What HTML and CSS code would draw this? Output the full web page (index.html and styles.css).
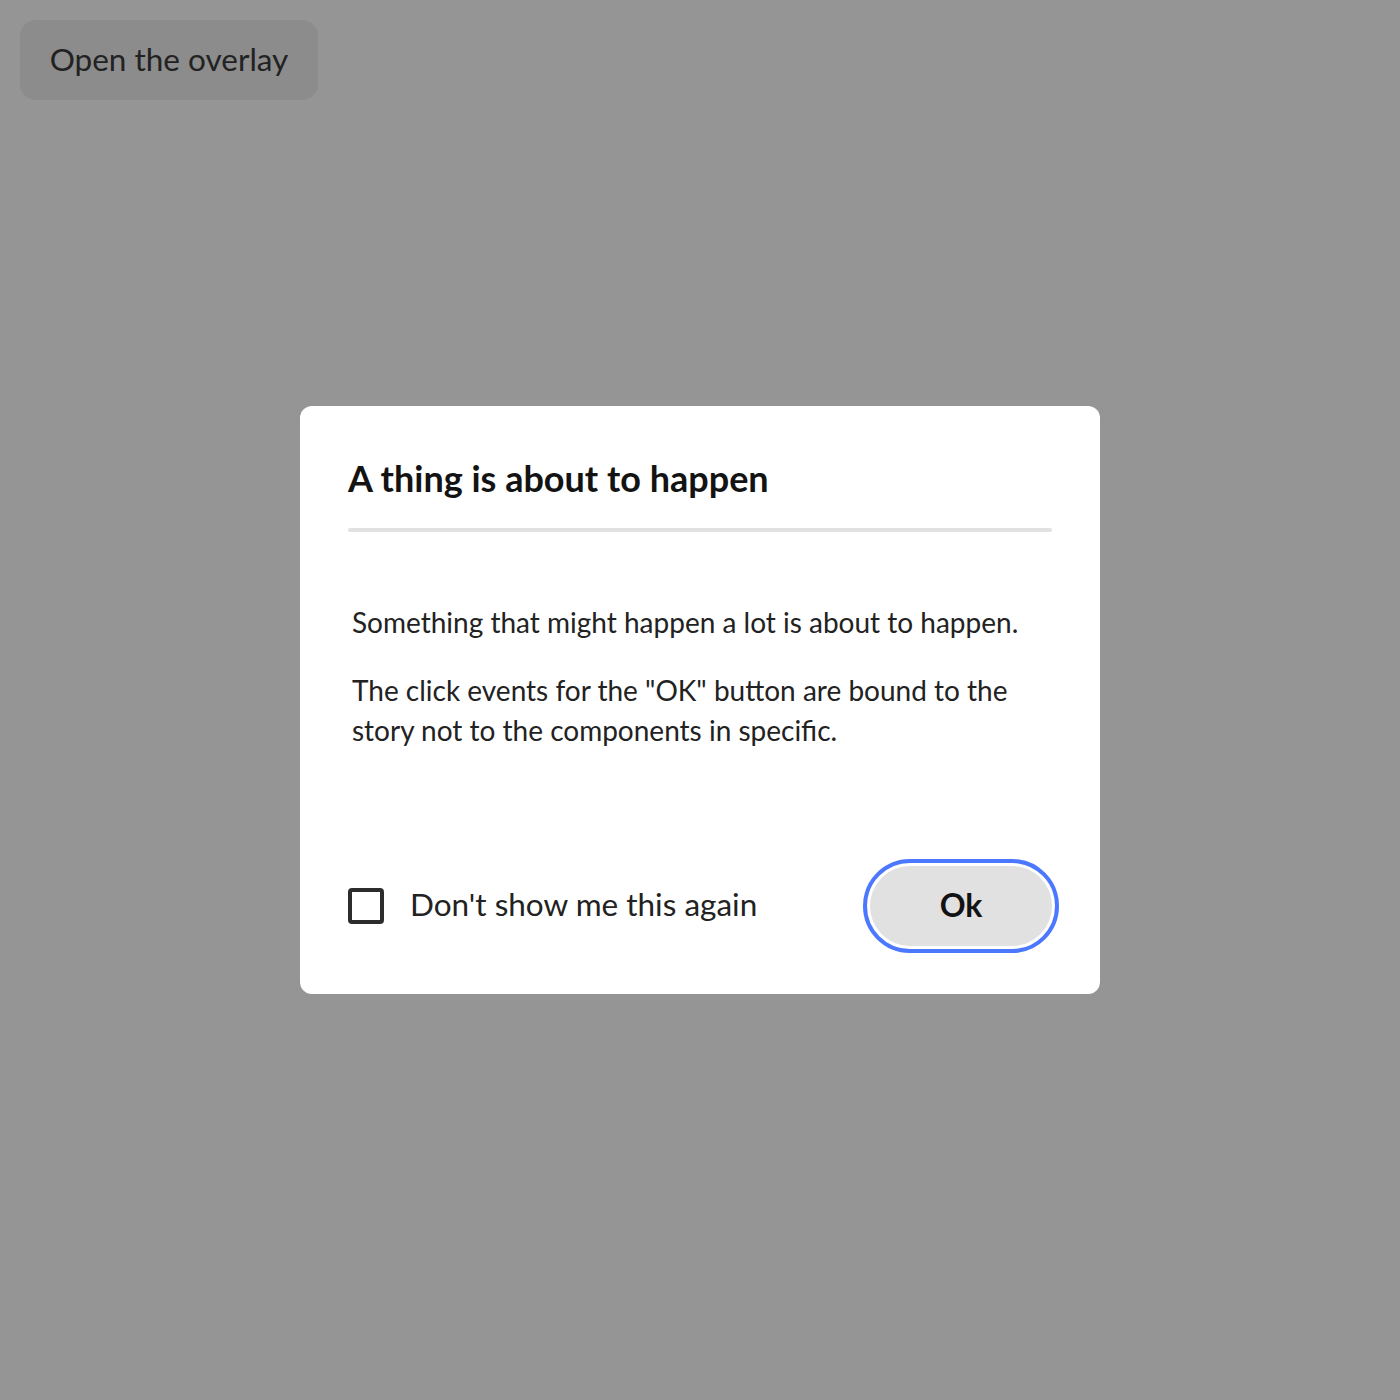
FILE: index.html
```html
<!DOCTYPE html>
<html lang="en">
<head>
<meta charset="utf-8">
<title>Dialog</title>
<link rel="stylesheet" href="styles.css">
</head>
<body>
<button class="trigger" type="button">Open the overlay</button>
<div class="overlay">
  <section class="dialog" role="dialog" aria-labelledby="dlg-title">
    <h2 class="dialog-title" id="dlg-title">A thing is about to happen</h2>
    <hr class="dialog-divider">
    <div class="dialog-body">
      <p>Something that might happen a lot is about to happen.</p>
      <p>The click events for the "OK" button are bound to the story not to the components in specific.</p>
    </div>
    <div class="dialog-footer">
      <label class="check">
        <span class="check-box"></span>
        <span class="check-label">Don't show me this again</span>
      </label>
      <button class="ok-btn" type="button">Ok</button>
    </div>
  </section>
</div>
</body>
</html>
```

FILE: styles.css
```css
html, body {
  margin: 0;
  padding: 0;
}
body {
  background: #959595;
  font-family: "Lato", "Open Sans", sans-serif;
  color: #222222;
  min-height: 1400px;
  padding: 20px;
  box-sizing: border-box;
}
.trigger {
  font-family: inherit;
  font-size: 31.5px;
  color: #222222;
  background: #8c8c8c;
  border: none;
  border-radius: 16px;
  height: 80px;
  width: 298px;
  padding: 0 0 2px;
  cursor: pointer;
}
.overlay {
  position: fixed;
  inset: 0;
  display: flex;
  align-items: center;
  justify-content: center;
}
.dialog {
  width: 800px;
  height: 588px;
  box-sizing: border-box;
  background: #ffffff;
  border-radius: 12px;
  padding: 42px 48px 48px;
  display: flex;
  flex-direction: column;
}
.dialog-title {
  margin: 0;
  font-size: 36px;
  line-height: 60px;
  font-weight: 700;
  color: #131313;
}
.dialog-divider {
  margin: 20px 0 0;
  border: none;
  height: 4px;
  border-radius: 2px;
  background: #e1e1e1;
}
.dialog-body {
  margin-top: 70px;
  padding-left: 4px;
  font-size: 28px;
  line-height: 40px;
  color: #222222;
}
.dialog-body p {
  margin: 0 0 28px;
}
.dialog-body p:last-child {
  margin-bottom: 0;
}
.dialog-footer {
  margin-top: auto;
  display: flex;
  align-items: center;
  justify-content: space-between;
}
.check {
  display: flex;
  align-items: center;
  gap: 26px;
  font-size: 31.5px;
  color: #222222;
}
.check-box {
  width: 36px;
  height: 36px;
  box-sizing: border-box;
  border: 4px solid #2c2c2c;
  border-radius: 4px;
}
.check-label {
  padding-bottom: 4px;
}
.ok-btn {
  font-family: inherit;
  font-size: 32px;
  font-weight: 700;
  color: #131313;
  background: #e1e1e1;
  border: none;
  border-radius: 40px;
  height: 80px;
  width: 182px;
  padding: 0 0 4px;
  outline: 4px solid #4c78ff;
  outline-offset: 3px;
}
```
